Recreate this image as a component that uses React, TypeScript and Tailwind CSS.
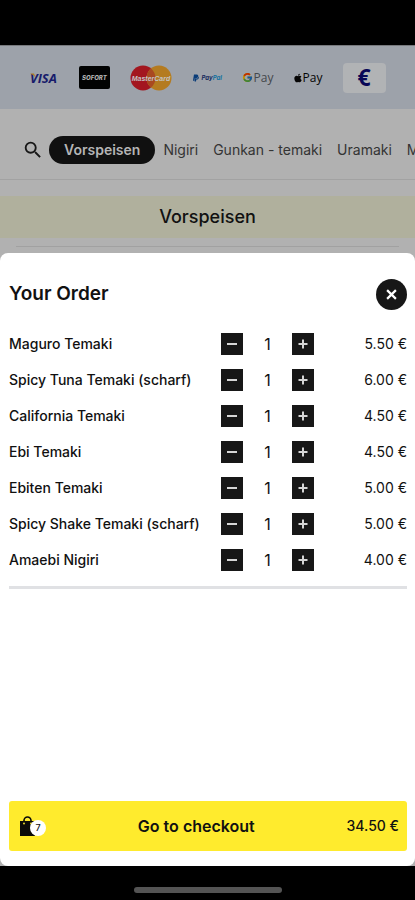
import { FaApple, FaPaypal } from "react-icons/fa";
import { FcGoogle } from "react-icons/fc";
import { MdSearch } from "react-icons/md";

type OrderItem = { name: string; quantity: number; price: number };

const items: OrderItem[] = [
  { name: "Maguro Temaki", quantity: 1, price: 5.5 },
  { name: "Spicy Tuna Temaki (scharf)", quantity: 1, price: 6 },
  { name: "California Temaki", quantity: 1, price: 4.5 },
  { name: "Ebi Temaki", quantity: 1, price: 4.5 },
  { name: "Ebiten Temaki", quantity: 1, price: 5 },
  { name: "Spicy Shake Temaki (scharf)", quantity: 1, price: 5 },
  { name: "Amaebi Nigiri", quantity: 1, price: 4 },
];

const categories = ["Vorspeisen", "Nigiri", "Gunkan - temaki", "Uramaki", "M"];

const formatPrice = (value: number) => `${value.toFixed(2)} €`;

function PaymentMethods() {
  return (
    <div className="flex h-16 items-center justify-center gap-5 border-t border-[#77797d] bg-[#9da2aa]">
      <svg viewBox="0 0 29 14" className="h-[14px] w-[29px] overflow-visible" role="img" aria-label="Visa">
        <text x="0" y="12" fontFamily="Open Sans, sans-serif" fontSize="13" fontWeight="700" fontStyle="italic" fill="#171b6b">
          VISA
        </text>
        <path d="M0 2.500h4l1.500 4Q4 3.800 0 2.500Z" fill="#b07b20" />
      </svg>
      <svg viewBox="0 0 31 23" className="h-[23px] w-[31px]" role="img" aria-label="Sofort">
        <rect width="31" height="23" rx="2" fill="#020303" />
        <text x="15.500" y="14" textAnchor="middle" fontFamily="Inter, sans-serif" fontSize="6" fontWeight="800" fontStyle="italic" fill="#b3b3b3">
          SOFORT
        </text>
      </svg>
      <svg viewBox="0 0 42 26" className="h-[26px] w-[42px]" role="img" aria-label="MasterCard">
        <circle cx="13" cy="13" r="12.500" fill="#a3161f" />
        <circle cx="29" cy="13" r="12.500" fill="#b47b20" />
        <path d="M21 3.400a12.500 12.500 0 0 1 0 19.200a12.500 12.500 0 0 1 0-19.200Z" fill="#a94920" />
        <text x="21" y="15.500" textAnchor="middle" fontFamily="Liberation Sans, sans-serif" fontSize="7" fontWeight="700" fontStyle="italic" fill="#c4c4c4">
          MasterCard
        </text>
      </svg>
      <span className="flex w-[30px] items-center gap-0.5 text-[6px] font-bold italic text-[#14295c]">
        <FaPaypal className="size-2 shrink-0 text-[#093c79]" />
        <span>
          Pay<span className="text-[#13719f]">Pal</span>
        </span>
      </span>
      <span className="flex w-[31px] items-center gap-px text-xs text-[#45484c]">
        <FcGoogle className="size-[11px] shrink-0 brightness-75" />
        <span className="font-['Open_Sans',sans-serif]">Pay</span>
      </span>
      <span className="flex w-[30px] items-center text-xs text-[#050505]">
        <FaApple className="size-[10px] shrink-0" />
        <span className="font-['Open_Sans',sans-serif]">Pay</span>
      </span>
      <span className="flex h-[30px] w-[43px] items-center justify-center rounded-sm bg-[#b1b3b5] font-['Open_Sans',sans-serif] text-[23px] font-bold leading-none text-[#080657]">
        €
      </span>
    </div>
  );
}

function CategoryNav() {
  return (
    <nav className="flex h-[71px] items-center overflow-hidden border-b border-[#a2a2a2] pb-px pl-[22px] pt-3">
      <button type="button" aria-label="Search" className="mr-[5px] shrink-0 text-[#171717]">
        <MdSearch className="size-[22px]" />
      </button>
      <div className="flex shrink-0 items-center text-sm text-[#343434]">
        {categories.map((category, index) => (
          <a
            key={category}
            href={`#${category}`}
            className={
              index === 0
                ? "flex h-7 items-center rounded-full bg-[#101010] px-[15px] font-semibold text-[#b5b5b5]"
                : "pl-2 pr-[7px]"
            }
          >
            {category}
          </a>
        ))}
      </div>
    </nav>
  );
}

function StepButton({ label, plus = false }: { label: string; plus?: boolean }) {
  return (
    <button
      type="button"
      aria-label={label}
      className="flex size-[22px] items-center justify-center bg-[#171717] text-[#d6d6d6]"
    >
      <svg viewBox="0 0 10 10" className="size-[10px]" fill="none" stroke="currentColor" strokeWidth="2">
        <path d={plus ? "M0.500 5h9M5 0.500v9" : "M0 5h10"} />
      </svg>
    </button>
  );
}

function OrderRow({ item }: { item: OrderItem }) {
  return (
    <li className="grid h-9 grid-cols-[1fr_93px_93px] items-center text-sm">
      <span className="whitespace-nowrap font-medium">{item.name}</span>
      <span className="flex items-center justify-between">
        <StepButton label={`Remove one ${item.name}`} />
        <span className="text-base">{item.quantity}</span>
        <StepButton label={`Add one ${item.name}`} plus />
      </span>
      <span className="text-right">{formatPrice(item.price)}</span>
    </li>
  );
}

function CheckoutButton() {
  const count = items.reduce((sum, item) => sum + item.quantity, 0);
  const total = items.reduce((sum, item) => sum + item.quantity * item.price, 0);

  return (
    <button
      type="button"
      className="mt-auto flex h-[50px] w-full items-center justify-between rounded-[3px] bg-[#ffeb2d] pl-[11px] pr-2"
    >
      <span className="relative w-[26px]">
        <svg viewBox="0 0 15 20" className="h-5 w-[15px]" aria-hidden="true">
          <path d="M0 5h15v15H0Z" fill="#0b0b08" />
          <path d="M4 9V4.500a3.500 3.500 0 0 1 7 0V9" fill="none" stroke="#0b0b08" strokeWidth="1.600" />
          <circle cx="4" cy="7.500" r="0.900" fill="#ffeb2d" />
          <circle cx="11" cy="7.500" r="0.900" fill="#ffeb2d" />
        </svg>
        <span className="absolute right-0 top-1 flex size-4 items-center justify-center rounded-full bg-white text-[9px] font-medium">
          {count}
        </span>
      </span>
      <span className="text-base font-semibold">Go to checkout</span>
      <span className="text-sm font-medium">{formatPrice(total)}</span>
    </button>
  );
}

export default function App() {
  return (
    <div className="flex min-h-screen flex-col bg-[#b1b1b1] font-['Inter',sans-serif] text-[#111111]">
      <div className="h-[45px] bg-black" />
      <PaymentMethods />
      <CategoryNav />
      <h1 className="mt-4 flex h-[42px] items-center justify-center bg-[#b0b09d] text-lg font-medium">
        Vorspeisen
      </h1>
      <hr className="mx-4 mb-1.5 mt-2 border-[#a1a1a1]" />

      <section
        aria-label="Your Order"
        className="flex grow flex-col rounded-lg bg-white pb-[15px] pl-[9px] pr-2 pt-[25px]"
      >
        <header className="flex items-center justify-between">
          <h2 className="text-[19px] font-semibold leading-8">Your Order</h2>
          <button
            type="button"
            aria-label="Close"
            className="flex size-[31px] items-center justify-center rounded-full bg-[#171717] text-white"
          >
            <svg viewBox="0 0 10 10" className="size-[11px]" fill="none" stroke="currentColor" strokeWidth="2">
              <path d="M1 1l8 8M9 1L1 9" />
            </svg>
          </button>
        </header>
        <ul className="mt-4 border-b-[3px] border-[#e0e1e4] pb-2">
          {items.map((item) => (
            <OrderRow key={item.name} item={item} />
          ))}
        </ul>
        <CheckoutButton />
      </section>

      <footer className="flex h-[34px] justify-center bg-black pt-[21px]">
        <div className="h-1.5 w-[148px] rounded-full bg-[#545454]" />
      </footer>
    </div>
  );
}
